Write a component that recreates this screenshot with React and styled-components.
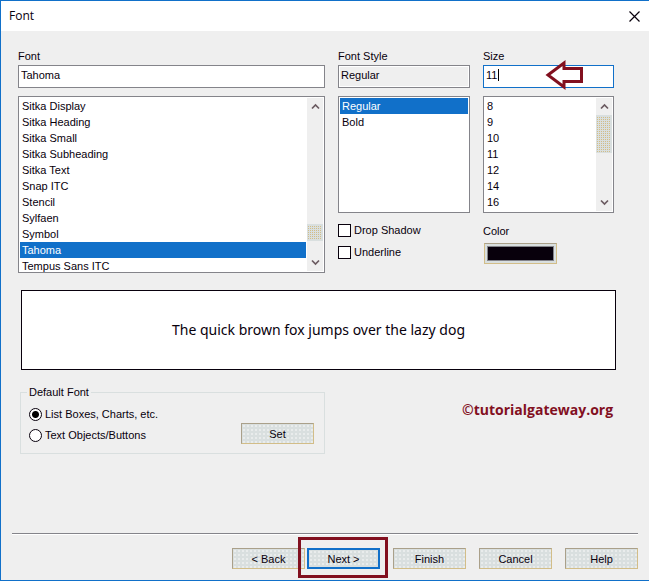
import React, { useState } from "react";
import styled, { createGlobalStyle, css } from "styled-components";

const GlobalStyle = createGlobalStyle`
  *, *::before, *::after { box-sizing: border-box; }
  body {
    margin: 0;
    background: #efefef;
    color: #08000c;
    font: 11px/16px "Liberation Sans", Arial, sans-serif;
  }
  button, input { font: inherit; color: inherit; }
`;

const BLUE = "#1170c9";
const RED = "#82101f";
const GREY = "#84848a";
const FACE = "#d9dfdf";
const TAN = "#d2bd88";

const Dialog = styled.main`
  min-height: 100vh;
  display: flex;
  flex-direction: column;
  border: solid ${BLUE};
  border-width: 1px 0 1px 1px;
`;

const TitleBar = styled.header`
  height: 30px;
  display: flex;
  align-items: center;
  justify-content: space-between;
  padding: 0 9px 0 8px;
  background: #fff;
`;

const Title = styled.h1`
  margin: 0;
  font: 12px/16px "Open Sans", "Noto Sans", sans-serif;
`;

const CloseButton = styled.button`
  display: flex;
  padding: 0;
  border: 0;
  background: none;
`;

const Body = styled.div`
  padding: 17px 33px 0 17px;
`;

const Columns = styled.div`
  display: grid;
  grid-template-columns: minmax(0, 1fr) 132px 131px;
  gap: 13px;
  padding-right: 2px;
`;

const Column = styled.section`
  display: flex;
  flex-direction: column;
`;

const FieldLabel = styled.label`
  line-height: 17px;
`;

const Field = styled.div`
  position: relative;
  display: flex;
  margin-bottom: 8px;
`;

const TextInput = styled.input`
  width: 100%;
  height: 23px;
  padding: 0 2px 3px;
  border: 1px solid ${(p) => (p.$active ? BLUE : GREY)};
  border-radius: 0;
  outline: 0;
  background: ${(p) => (p.readOnly ? "#efefef" : "#fff")};
  box-shadow: inset 0 0 0 1px #fff;
`;

const Caret = styled.span`
  position: absolute;
  left: 15px;
  top: 4px;
  width: 1px;
  height: 12px;
  background: #000;
`;

const ArrowMark = styled.svg`
  position: absolute;
  right: 30px;
  top: -6px;
`;

const ListFrame = styled.div`
  display: flex;
  height: ${(p) => p.$height}px;
  padding: 1px;
  border: 1px solid ${GREY};
  background: #fff;
`;

const Options = styled.ul`
  flex: 1;
  min-width: 0;
  margin: 0;
  padding: 0;
  list-style: none;
`;

const Option = styled.li`
  height: 16px;
  padding-left: 2px;
  white-space: nowrap;
  cursor: default;
  ${(p) =>
    p.$selected &&
    css`
      background: ${BLUE};
      color: #fff;
    `}
`;

const ScrollTrack = styled.div`
  width: 16px;
  margin-left: 1px;
  display: flex;
  flex-direction: column;
  background: #efefef;
`;

const ScrollButton = styled.button`
  flex: none;
  display: flex;
  align-items: center;
  justify-content: center;
  height: 17px;
  padding: 0;
  border: 0;
  background: none;
`;

const ScrollSpace = styled.div`
  flex: ${(p) => p.$grow} 0 0;
`;

const ScrollThumb = styled.div`
  flex: none;
  height: ${(p) => p.$height}px;
  border: 1px solid ${FACE};
  background:
    repeating-linear-gradient(${FACE} 0 1px, transparent 1px 2px),
    repeating-linear-gradient(90deg, ${TAN} 0 1px, ${FACE} 1px 2px);
`;

const Checks = styled.div`
  display: flex;
  flex-direction: column;
  gap: 6px;
  margin-top: 9px;
`;

const Choice = styled.label`
  display: flex;
  align-items: center;
  gap: 3px;
`;

const Toggle = styled.input`
  appearance: none;
  flex: none;
  width: 13px;
  height: 13px;
  margin: 0;
  border: 1px solid #08000c;
  border-radius: ${(p) => (p.type === "radio" ? "50%" : "0")};
  background: #fff;
  &[type="radio"]:checked {
    background: radial-gradient(circle, #000 3px, #fff 4px);
  }
`;

const ColorLabel = styled.span`
  margin-top: 10px;
  margin-bottom: 4px;
`;

const ColorButton = styled.button`
  width: 73px;
  height: 21px;
  margin-left: 1px;
  padding: 2px;
  border: 1px solid ${TAN};
  border-top-color: #aaa08a;
  background: ${FACE};
`;

const Swatch = styled.span`
  display: block;
  height: 15px;
  border: 1px solid ${GREY};
  background: #08000c;
`;

const Preview = styled.output`
  display: flex;
  align-items: center;
  justify-content: center;
  height: 80px;
  margin: 17px 0 0 3px;
  border: 1px solid #08000c;
  background: #fff;
  font: 14px/20px "Noto Sans", sans-serif;
`;

const LowerRow = styled.div`
  display: grid;
  grid-template-columns: minmax(0, 1fr) 150px;
  column-gap: 137px;
  align-items: start;
  padding: 13px 4px 0 2px;
`;

const Group = styled.fieldset`
  display: flex;
  align-items: flex-end;
  justify-content: space-between;
  min-width: 0;
  margin: 0;
  padding: 5px 10px 9px 8px;
  border: 1px solid ${FACE};
`;

const Legend = styled.legend`
  margin-left: -2px;
  padding: 0 2px;
  line-height: 18px;
`;

const Radios = styled.div`
  display: flex;
  flex-direction: column;
  gap: 5px;
  padding-bottom: 1px;
`;

const Credit = styled.p`
  margin: 17px 0 0;
  color: ${RED};
  font: bold 14px/20px "Open Sans", sans-serif;
  white-space: nowrap;
`;

const Footer = styled.footer`
  margin: auto 11px 0;
  padding: 14px 0 11px;
  border-top: 1px solid ${GREY};
  box-shadow: inset 0 1px #fff;
  display: flex;
  justify-content: flex-end;
  gap: 13px;
`;

const StepButtons = styled.div`
  display: flex;
  gap: 2px;
`;

const PushButton = styled.button`
  width: 73px;
  height: 21px;
  padding: 0;
  border: ${(p) => (p.$primary ? `2px solid ${BLUE}` : `1px solid ${TAN}`)};
  ${(p) => !p.$primary && "border-top-color: #aaa08a; border-left-color: #aaa08a;"}
  background: radial-gradient(circle, #e9ecec 1px, transparent 1px) 0 0 / 4px 4px ${FACE};
`;

const Highlighted = styled.div`
  position: relative;
  display: flex;
  &::after {
    content: "";
    position: absolute;
    inset: -11px -8px -9px -9px;
    border: 3px solid ${RED};
    pointer-events: none;
  }
`;

const fonts = [
  "Sitka Display", "Sitka Heading", "Sitka Small", "Sitka Subheading",
  "Sitka Text", "Snap ITC", "Stencil", "Sylfaen", "Symbol", "Tahoma",
  "Tempus Sans ITC",
];
const styles = ["Regular", "Bold"];
const sizes = ["8", "9", "10", "11", "12", "14", "16"];

function Chevron({ down }) {
  return (
    <svg width="9" height="7" viewBox="0 0 9 7" fill="none" stroke="#6b5b61" strokeWidth="1.7">
      <path d={down ? "M1 1.500 4.500 5 8 1.500" : "M1 5.500 4.500 2 8 5.500"} />
    </svg>
  );
}

function Scrollbar({ before, after, thumb }) {
  return (
    <ScrollTrack>
      <ScrollButton type="button" aria-label="Scroll up"><Chevron /></ScrollButton>
      <ScrollSpace $grow={before} />
      <ScrollThumb $height={thumb} />
      <ScrollSpace $grow={after} />
      <ScrollButton type="button" aria-label="Scroll down"><Chevron down /></ScrollButton>
    </ScrollTrack>
  );
}

function ListBox({ label, items, selected, onSelect, height, scroll }) {
  return (
    <ListFrame $height={height}>
      <Options role="listbox" aria-label={label}>
        {items.map((item) => (
          <Option
            key={item}
            role="option"
            aria-selected={item === selected}
            $selected={item === selected}
            onClick={() => onSelect(item)}
          >
            {item}
          </Option>
        ))}
      </Options>
      {scroll && <Scrollbar {...scroll} />}
    </ListFrame>
  );
}

export default function App() {
  const [font, setFont] = useState("Tahoma");
  const [style, setStyle] = useState("Regular");
  const [size, setSize] = useState("11");

  return (
    <Dialog>
      <GlobalStyle />
      <TitleBar>
        <Title>Font</Title>
        <CloseButton type="button" aria-label="Close">
          <svg width="11" height="11" viewBox="0 0 11 11" stroke="#08000c" strokeWidth="1.2">
            <path d="M.5.5l10 10M10.5.5l-10 10" />
          </svg>
        </CloseButton>
      </TitleBar>

      <Body>
        <Columns>
          <Column>
            <FieldLabel htmlFor="font">Font</FieldLabel>
            <Field>
              <TextInput id="font" value={font} onChange={(e) => setFont(e.target.value)} />
            </Field>
            <ListBox label="Fonts" items={fonts} selected={font} onSelect={setFont}
              height={177} scroll={{ before: 109, after: 13, thumb: 17 }} />
          </Column>

          <Column>
            <FieldLabel htmlFor="style">Font Style</FieldLabel>
            <Field>
              <TextInput id="style" value={style} readOnly />
            </Field>
            <ListBox label="Font styles" items={styles} selected={style} onSelect={setStyle} height={117} />
            <Checks>
              <Choice><Toggle type="checkbox" />Drop Shadow</Choice>
              <Choice><Toggle type="checkbox" />Underline</Choice>
            </Checks>
          </Column>

          <Column>
            <FieldLabel htmlFor="size">Size</FieldLabel>
            <Field>
              <TextInput id="size" value={size} $active onChange={(e) => setSize(e.target.value)} />
              <Caret />
              <ArrowMark width="40" height="32" viewBox="0 0 40 32" fill="none" stroke={RED} strokeWidth="3">
                <path d="M4 16 20 4V9.500H37.500V22.500H20V28Z" />
              </ArrowMark>
            </Field>
            <ListBox label="Sizes" items={sizes} onSelect={setSize}
              height={117} scroll={{ before: 0, after: 1, thumb: 38 }} />
            <ColorLabel id="color">Color</ColorLabel>
            <ColorButton type="button" aria-labelledby="color"><Swatch /></ColorButton>
          </Column>
        </Columns>

        <Preview>The quick brown fox jumps over the lazy dog</Preview>

        <LowerRow>
          <Group>
            <Legend>Default Font</Legend>
            <Radios>
              <Choice><Toggle type="radio" name="target" defaultChecked />List Boxes, Charts, etc.</Choice>
              <Choice><Toggle type="radio" name="target" />Text Objects/Buttons</Choice>
            </Radios>
            <PushButton type="button">Set</PushButton>
          </Group>
          <Credit>©tutorialgateway.org</Credit>
        </LowerRow>
      </Body>

      <Footer>
        <StepButtons>
          <PushButton type="button">&lt; Back</PushButton>
          <Highlighted>
            <PushButton type="button" $primary>Next &gt;</PushButton>
          </Highlighted>
        </StepButtons>
        <PushButton type="button">Finish</PushButton>
        <PushButton type="button">Cancel</PushButton>
        <PushButton type="button">Help</PushButton>
      </Footer>
    </Dialog>
  );
}
